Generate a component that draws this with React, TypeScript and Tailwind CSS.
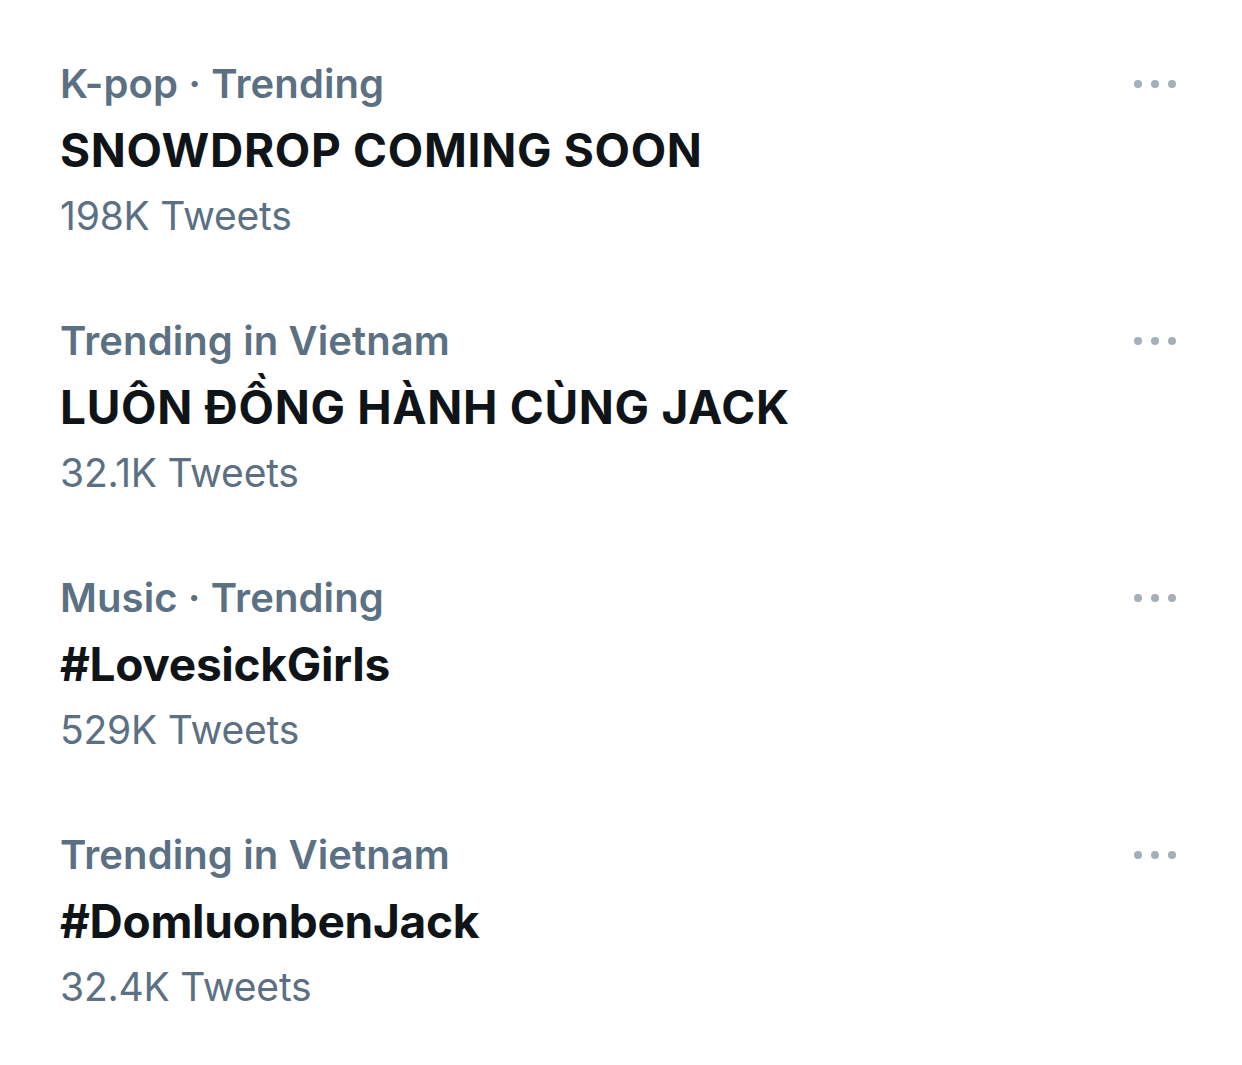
const trends = [
  { category: 'K-pop · Trending', title: 'SNOWDROP COMING SOON', count: '198K Tweets', hashtag: false },
  { category: 'Trending in Vietnam', title: 'LUÔN ĐỒNG HÀNH CÙNG JACK', count: '32.1K Tweets', hashtag: false },
  { category: 'Music · Trending', title: '#LovesickGirls', count: '529K Tweets', hashtag: true },
  { category: 'Trending in Vietnam', title: '#DomluonbenJack', count: '32.4K Tweets', hashtag: true },
];

export default function App() {
  return (
    <div
      className="min-h-screen bg-white pl-[60px] pr-[66px] pt-[51px] flex flex-col gap-[59px]"
      style={{ fontFamily: 'Inter, "Noto Sans", sans-serif' }}
    >
      {trends.map((t, i) => (
        <div key={i} className="flex items-start justify-between">
          <div className="flex flex-col">
            <div className="h-[66px] flex items-center text-[40px] font-semibold text-[#5b7083] tracking-[0.1px]">
              {t.category}
            </div>
            <div
              className={`h-[66px] flex items-center text-[46px] font-bold text-[#0f1419] ${
                t.hashtag ? 'tracking-[-0.3px]' : 'tracking-[0.7px]'
              }`}
            >
              {t.title}
            </div>
            <div className="h-[66px] flex items-center text-[39px] text-[#5b7083] tracking-[-0.2px]">
              {t.count}
            </div>
          </div>
          <div className="h-[66px] flex items-center gap-[9px]">
            <span className="w-[8px] h-[8px] rounded-full bg-[#a3afbb]" />
            <span className="w-[8px] h-[8px] rounded-full bg-[#a3afbb]" />
            <span className="w-[8px] h-[8px] rounded-full bg-[#a3afbb]" />
          </div>
        </div>
      ))}
    </div>
  );
}
